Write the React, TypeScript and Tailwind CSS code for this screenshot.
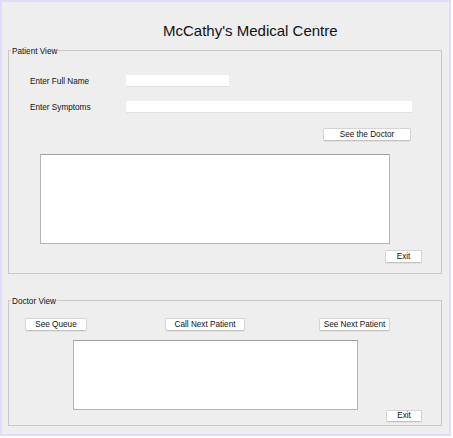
const font = { fontFamily: '"Liberation Sans", Arial, sans-serif' };

type BtnProps = { label: string; className: string };

const Btn = ({ label, className }: BtnProps) => (
  <button
    className={`flex items-center justify-center bg-white border border-[#d4d4d4] border-b-[#c2c2c2] rounded-[2px] text-[8.2px] leading-none text-[#111] shadow-[0_1px_0_rgba(0,0,0,0.05)] ${className}`}
  >
    <span className="mt-[1px]">{label}</span>
  </button>
);

const Legend = ({ label }: { label: string }) => (
  <span className="block w-fit -mt-[5px] ml-[2px] px-[1px] h-[11px] leading-[11px] text-[8.2px] text-[#111] bg-[#eeeeee]">
    {label}
  </span>
);

export default function App() {
  return (
    <div style={font} className="w-[451px] h-[436px] border-2 border-[#dedefa] bg-[#eeeeee] flex flex-col">
      <div className="h-[48px] pt-[20px] pl-[161px] text-[15px] leading-[18px] text-[#111]">
        McCathy's Medical Centre
      </div>

      <div className="ml-[6px] w-[434px] border border-[#c8c8c8] flex flex-col pb-[10px]">
        <Legend label="Patient View" />
        <div className="mt-[18px] h-[12px] flex items-center">
          <span className="ml-[21px] mt-[2px] w-[96px] text-[8.2px] text-[#111]">Enter Full Name</span>
          <div className="w-[103px] h-[12px] bg-white border-b border-[#e0e0e0]" />
        </div>
        <div className="mt-[14px] h-[12px] flex items-center">
          <span className="ml-[21px] mt-[2px] w-[96px] text-[8.2px] text-[#111]">Enter Symptoms</span>
          <div className="w-[286px] h-[12px] bg-white border-b border-[#e0e0e0]" />
        </div>
        <Btn label="See the Doctor" className="mt-[15px] ml-[314px] w-[88px] h-[13px]" />
        <div className="mt-[13px] ml-[31px] w-[350px] h-[90px] bg-white border border-[#b4b4b4] border-t-[#a0a0a0]" />
        <Btn label="Exit" className="mt-[6px] ml-[376px] w-[37px] h-[13px]" />
      </div>

      <div className="mt-[26px] ml-[6px] w-[434px] border border-[#c8c8c8] flex flex-col pb-[3px]">
        <Legend label="Doctor View" />
        <div className="mt-[11px] flex">
          <Btn label="See Queue" className="ml-[16px] w-[62px] h-[13px]" />
          <Btn label="Call Next Patient" className="ml-[78px] w-[80px] h-[13px]" />
          <Btn label="See Next Patient" className="ml-[74px] w-[71px] h-[13px]" />
        </div>
        <div className="mt-[9px] ml-[64px] w-[285px] h-[70px] bg-white border border-[#b4b4b4] border-t-[#a0a0a0]" />
        <Btn label="Exit" className="ml-[377px] w-[36px] h-[12px]" />
      </div>
    </div>
  );
}
